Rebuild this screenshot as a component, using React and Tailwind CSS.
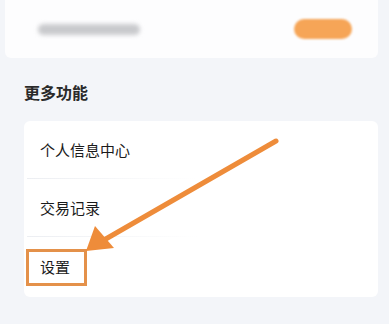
import React from 'react';

const font = { fontFamily: '"Noto Sans CJK SC", "Noto Sans", sans-serif' };

const Row = ({ label, divider }) => (
    <div className="relative h-[58px] flex items-center pl-[16px]">
        <span className="text-[15px] text-[#1b1b1b]">{label}</span>
        {divider && <div className="absolute bottom-0 left-[3px] w-[170px] h-px bg-gradient-to-r from-[#eceef2] to-transparent" />}
    </div>
);

const App = () => {
    return (
        <div className="relative w-[389px] h-[324px] overflow-hidden bg-[#f3f5f9]" style={font}>
            <div className="pl-[5px] pr-[11px]">
                <div className="h-[58px] bg-[#fdfdfe] rounded-b-[6px] flex items-center justify-between pl-[33px] pr-[26px]">
                    <div className="w-[102px] h-[11px] rounded-full bg-[#c9cacd] blur-[2px]" />
                    <div className="w-[58px] h-[20px] rounded-full bg-[#f6a557] blur-[1px]" />
                </div>
            </div>
            <div className="pl-[24px] pt-[24px] pb-[19px] text-[16px] font-bold text-[#2a2a2a] leading-[20px]">更多功能</div>
            <div className="ml-[24px] mr-[11px] bg-white rounded-[6px]">
                <Row label="个人信息中心" divider />
                <Row label="交易记录" divider />
                <div className="h-[60px] flex items-center pl-[2px] pt-[1px]">
                    <div className="w-[61px] h-[37px] border-[3px] border-[#e4914a] flex items-center pl-[11px]">
                        <span className="text-[15px] text-[#1b1b1b]">设置</span>
                    </div>
                </div>
            </div>
            <svg className="absolute left-0 top-0" width="389" height="324" viewBox="0 0 389 324">
                <line x1="276" y1="141" x2="104" y2="240" stroke="#ee8c3a" strokeWidth="5" strokeLinecap="round" />
                <polygon points="86,251 95,226 114,248" fill="#ee8c3a" />
            </svg>
        </div>
    );
};

export default App;
